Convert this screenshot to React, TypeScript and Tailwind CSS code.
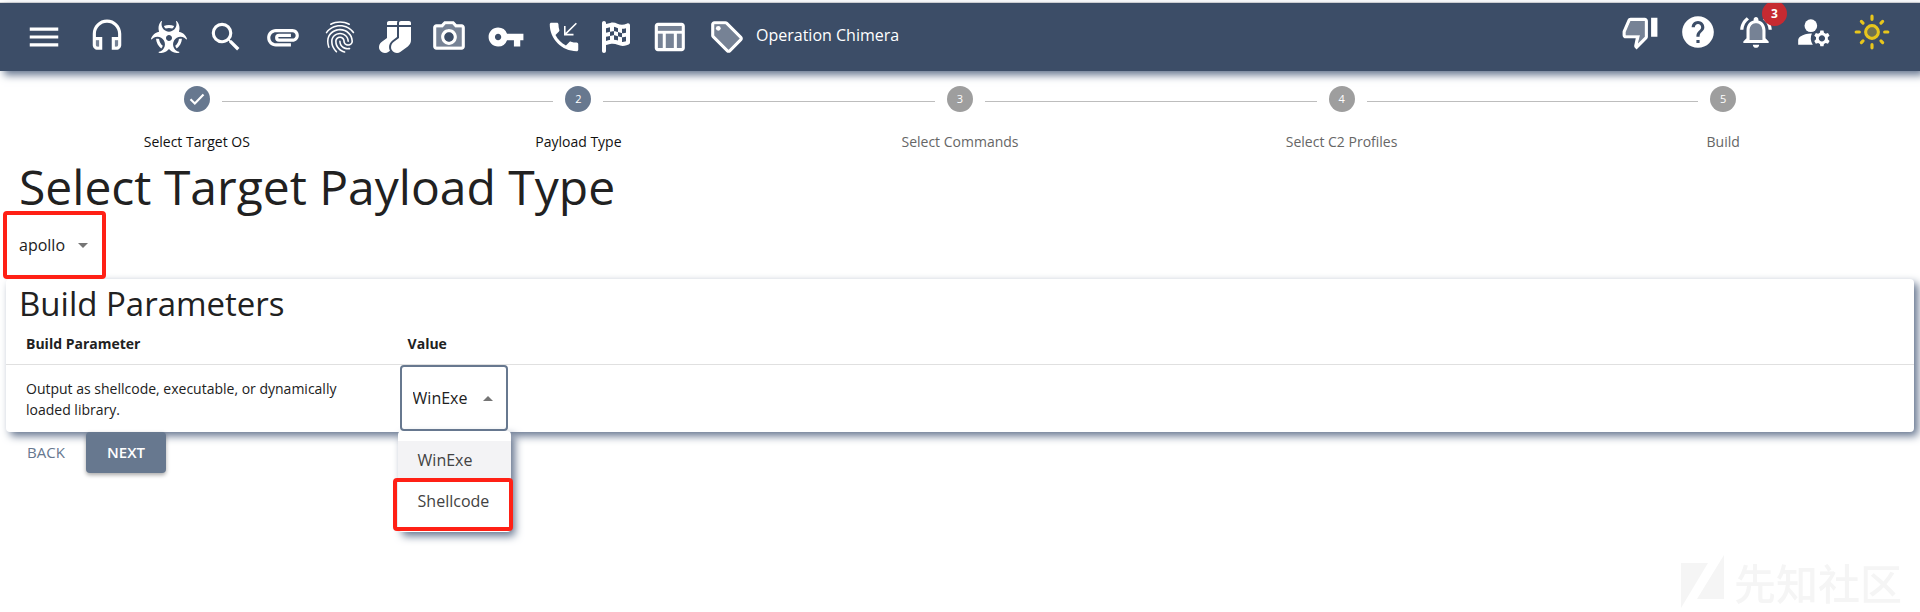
import React, { useState } from "react";
import {
  MdMenu,
  MdSearch,
  MdAttachment,
  MdFingerprint,
  MdVpnKey,
  MdPhoneCallback,
  MdHelp,
  MdManageAccounts,
} from "react-icons/md";
import { FaBiohazard, FaSocks } from "react-icons/fa";
import { FaFlagCheckered } from "react-icons/fa6";

type TwoToneProps = { shade: string; line: string; children?: React.ReactNode };

function TwoTone({ shade, line, children }: TwoToneProps) {
  return (
    <svg viewBox="0 0 24 24" className="size-[38px]" fill="currentColor" aria-hidden="true">
      <path d={shade} opacity=".3" fillRule="evenodd" />
      <path d={line} />
      {children}
    </svg>
  );
}

const Headset = () => (
  <TwoTone
    shade="M5 14v3c0 .55.45 1 1 1h1v-4H5zm12 4h1c.55 0 1-.45 1-1v-3h-2v4z"
    line="M12 1c-4.97 0-9 4.03-9 9v7c0 1.66 1.34 3 3 3h3v-8H5v-2c0-3.87 3.13-7 7-7s7 3.13 7 7v2h-4v8h3c1.66 0 3-1.34 3-3v-7c0-4.97-4.03-9-9-9zM7 14v4H6c-.55 0-1-.45-1-1v-3h2zm12 3c0 .55-.45 1-1 1h-1v-4h2v3z"
  />
);

const Camera = () => (
  <TwoTone
    shade="M14.12 4H9.88L8.05 6H4v12h16V6h-4.05l-1.83-2zM12 17c-2.76 0-5-2.24-5-5s2.24-5 5-5 5 2.24 5 5-2.24 5-5 5z"
    line="M20 4h-3.17L15 2H9L7.17 4H4c-1.1 0-2 .9-2 2v12c0 1.1.9 2 2 2h16c1.1 0 2-.9 2-2V6c0-1.1-.9-2-2-2zm0 14H4V6h4.05l1.83-2h4.24l1.83 2H20v12zM12 7c-2.76 0-5 2.24-5 5s2.24 5 5 5 5-2.24 5-5-2.24-5-5-5zm0 8c-1.65 0-3-1.35-3-3s1.35-3 3-3 3 1.35 3 3-1.35 3-3 3z"
  />
);

const TableChart = () => (
  <TwoTone
    shade="M5 10h3v9H5zM17 10h3v9h-3zM5 5h15v3H5zM10 10h5v9h-5z"
    line="M20 3H5c-1.1 0-2 .9-2 2v14c0 1.1.9 2 2 2h15c1.1 0 2-.9 2-2V5c0-1.1-.9-2-2-2zm0 2v3H5V5h15zm-5 14h-5v-9h5v9zM5 10h3v9H5v-9zm12 9v-9h3v9h-3z"
  />
);

const Tag = () => (
  <TwoTone
    shade="M11 4H4v7l9 9.01L20.01 13 11 4z"
    line="M21.41 11.58l-9-9C12.05 2.22 11.55 2 11 2H4c-1.1 0-2 .9-2 2v7c0 .55.22 1.05.59 1.42l9 9c.36.36.86.58 1.41.58s1.05-.22 1.41-.59l7-7c.37-.36.59-.86.59-1.41s-.23-1.06-.59-1.42zM13 20.01L4 11V4h7v-.01l9 9-7 7.02z"
  >
    <circle cx="6.5" cy="6.5" r="1.5" />
  </TwoTone>
);

const ThumbDown = () => (
  <TwoTone
    shade="M3 12v2h9l-1.34 5.34L15 15V5H6z"
    line="M15 3H6c-.83 0-1.54.5-1.84 1.22l-3.02 7.05c-.09.23-.14.47-.14.73v2c0 1.1.9 2 2 2h6.31l-.95 4.57-.03.32c0 .41.17.79.44 1.06L9.83 23l6.58-6.59c.37-.36.59-.86.59-1.41V5c0-1.1-.9-2-2-2zm0 12l-4.34 4.34L12 14H3v-2l3-7h9v10zm4-12h4v12h-4V3z"
  />
);

const Bell = () => (
  <TwoTone
    shade="M12 6.5c-2.49 0-4 2.02-4 4.5v6h8v-6c0-2.48-1.51-4.5-4-4.5z"
    line="M12 22c1.1 0 2-.9 2-2h-4c0 1.1.9 2 2 2zm6-11c0-3.07-1.63-5.64-4.5-6.32V4c0-.83-.67-1.5-1.5-1.5s-1.5.67-1.5 1.5v.68C7.64 5.36 6 7.92 6 11v5l-2 2v1h16v-1l-2-2v-5zm-2 6H8v-6c0-2.48 1.51-4.5 4-4.5s4 2.02 4 4.5v6zM7.58 4.08L6.15 2.65C3.75 4.48 2.17 7.3 2.03 10.5h2c.15-2.65 1.51-4.97 3.55-6.42zm12.39 6.42h2c-.15-3.2-1.73-6.02-4.12-7.85l-1.42 1.43c2.02 1.45 3.39 3.77 3.54 6.42z"
  />
);

const Sun = () => (
  <svg viewBox="0 0 24 24" className="size-[38px]" aria-hidden="true">
    <circle cx="12" cy="12" r="3" fill="currentColor" opacity=".3" />
    <circle cx="12" cy="12" r="4" fill="none" stroke="currentColor" strokeWidth="2" />
    <path
      d="M2 12h2M20 12h2M12 2v2M12 20v2M5.28 5.28l1.06 1.06M17.66 17.66l1.06 1.06M18.72 5.28l-1.06 1.06M6.34 17.66l-1.06 1.06"
      stroke="currentColor"
      strokeWidth="2"
      strokeLinecap="round"
    />
  </svg>
);

function NavLink({ label, children }: { label: string; children: React.ReactNode }) {
  return (
    <a href="#" aria-label={label} className="block">
      {children}
    </a>
  );
}

const icon = "size-[38px]";

function TopBar() {
  return (
    <header className="flex h-[68px] justify-between overflow-hidden bg-[#3c4d67] pr-[29px] pl-[25px] text-white shadow-[4px_4px_8px_#65758f]">
      <nav className="flex items-center gap-[25px]">
        <button type="button" aria-label="Menu">
          <MdMenu className={icon} />
        </button>
        <NavLink label="Callbacks"><Headset /></NavLink>
        <div className="flex items-center gap-5">
          <NavLink label="Payloads"><FaBiohazard className="h-8 w-9" /></NavLink>
          <div className="flex items-center gap-[19px]">
            <NavLink label="Search"><MdSearch className={icon} /></NavLink>
            <NavLink label="Files"><MdAttachment className={icon} /></NavLink>
            <NavLink label="Artifacts"><MdFingerprint className={icon} /></NavLink>
          </div>
          <div className="flex items-center gap-[19px]">
            <NavLink label="Proxies"><FaSocks className="size-8" /></NavLink>
            <NavLink label="Screenshots"><Camera /></NavLink>
            <NavLink label="Credentials"><MdVpnKey className={icon} /></NavLink>
          </div>
          <div className="flex items-center gap-[19px]">
            <NavLink label="Phone"><MdPhoneCallback className={icon} /></NavLink>
            <NavLink label="Objectives"><FaFlagCheckered className="h-8 w-7" /></NavLink>
          </div>
          <NavLink label="Reporting"><TableChart /></NavLink>
          <div className="flex items-center gap-[10px]">
            <NavLink label="Tags"><Tag /></NavLink>
            <a href="#" className="pb-1 text-base">Operation Chimera</a>
          </div>
        </div>
      </nav>
      <div className="flex items-center gap-5 pb-[10px]">
        <button type="button" aria-label="Feedback"><ThumbDown /></button>
        <button type="button" aria-label="Help"><MdHelp className={icon} /></button>
        <button type="button" aria-label="Notifications" className="relative">
          <Bell />
          <span className="absolute -top-3 -right-3 flex size-[25px] items-center justify-center rounded-full bg-[#c62a31] text-xs font-bold">
            3
          </span>
        </button>
        <button type="button" aria-label="Account settings"><MdManageAccounts className={icon} /></button>
        <button type="button" aria-label="Toggle theme" className="text-[#e8c61c]"><Sun /></button>
      </div>
    </header>
  );
}

const steps = ["Select Target OS", "Payload Type", "Select Commands", "Select C2 Profiles", "Build"];

function Stepper({ current }: { current: number }) {
  return (
    <ol className="grid grid-cols-5 px-[6px] pt-[15px]">
      {steps.map((name, i) => (
        <li key={name} className="flex flex-col items-center">
          <div className="flex h-[30px] w-full items-center gap-3">
            <span className={i === 0 ? "h-px flex-1" : "h-px flex-1 bg-[#bdbdbd]"} />
            <span
              className={
                i <= current
                  ? "flex size-[26px] items-center justify-center self-start rounded-full bg-[#67788f] text-[11px] text-white"
                  : "flex size-[26px] items-center justify-center self-start rounded-full bg-[#9e9e9e] text-[11px] text-white"
              }
            >
              {i < current ? (
                <svg viewBox="0 0 24 24" className="size-[26px]" fill="none" aria-label="Done">
                  <path d="M6 12.2l4 4 8-8.4" stroke="white" strokeWidth="2" />
                </svg>
              ) : (
                i + 1
              )}
            </span>
            <span className={i === steps.length - 1 ? "h-px flex-1" : "h-px flex-1 bg-[#bdbdbd]"} />
          </div>
          <span
            className={
              i <= current
                ? "mt-4 text-sm leading-5 font-medium text-[#111111]"
                : "mt-4 text-sm leading-5 text-[#666666]"
            }
          >
            {name}
          </span>
        </li>
      ))}
    </ol>
  );
}

function Caret({ up = false }: { up?: boolean }) {
  return (
    <svg viewBox="0 0 10 5" className="pointer-events-none -ml-[23px] h-[5px] w-[10px]" fill="#757575" aria-hidden="true">
      <path d={up ? "M0 5l5-5 5 5z" : "M0 0l5 5 5-5z"} />
    </svg>
  );
}

function Highlight() {
  return <span className="pointer-events-none absolute -inset-x-[5px] inset-y-0 rounded border-4 border-[#ff2015]" />;
}

export default function App() {
  const [output, setOutput] = useState("WinExe");
  return (
    <div className="min-h-screen bg-white font-['Open_Sans','Noto_Sans',sans-serif] text-[#212121]">
      <div className="pt-[2px]">
        <div className="border-t border-[#dddddd]">
          <TopBar />
        </div>
      </div>
      <Stepper current={1} />
      <main className="px-[6px]">
        <h1 className="px-[13px] pt-[10px] text-[48px] leading-[49px]">Select Target Payload Type</h1>
        <div className="relative ml-[2px] flex h-[68px] w-[93px] items-center">
          <select
            aria-label="Payload type"
            className="w-full appearance-none bg-transparent pl-[11px] text-base"
          >
            <option>apollo</option>
          </select>
          <Caret />
          <Highlight />
        </div>
        <section className="rounded bg-white shadow-[4px_4px_8px_#65758f]">
          <h2 className="px-[13px] pt-[2px] text-[33px] leading-[46px]">Build Parameters</h2>
          <table className="w-full table-fixed text-left text-sm">
            <thead>
              <tr className="border-b border-[#e0e0e0]">
                <th className="w-[20%] px-5 pt-[6px] pb-[9px] leading-[22px] font-bold">Build Parameter</th>
                <th className="px-5 pt-[6px] pb-[9px] leading-[22px] font-bold">Value</th>
              </tr>
            </thead>
            <tbody>
              <tr>
                <td className="px-5 leading-[21px]">
                  Output as shellcode, executable, or dynamically loaded library.
                </td>
                <td className="px-3 pb-px">
                  <div className="relative flex h-[66px] w-[108px] items-center rounded border-2 border-[#67788f]">
                    <select
                      aria-label="Output as shellcode, executable, or dynamically loaded library."
                      value={output}
                      onChange={(e) => setOutput(e.target.value)}
                      className="w-full appearance-none bg-transparent pl-[11px] text-base"
                    >
                      <option>WinExe</option>
                      <option>Shellcode</option>
                    </select>
                    <Caret up />
                    <ul
                      role="listbox"
                      aria-label="Output type"
                      className="absolute top-full -left-1 z-10 mt-[2px] w-[113px] rounded bg-white pt-[10px] pb-3 text-base shadow-[4px_4px_8px_#65758f]"
                    >
                      <li role="option" aria-selected="true" className="bg-[#f3f3f5] px-5 pt-2 pb-[7px] leading-[22px] text-[#424242]">
                        WinExe
                      </li>
                      <li role="option" aria-selected="false" className="relative px-5 pt-[11px] pb-[7px] leading-[24px] text-[#424242]">
                        Shellcode
                        <span className="pointer-events-none absolute top-0 -right-[2px] -bottom-[11px] -left-[5px] rounded border-4 border-[#ff2015]" />
                      </li>
                    </ul>
                  </div>
                </td>
              </tr>
            </tbody>
          </table>
        </section>
        <div className="flex">
          <button type="button" className="w-20 text-[15px] text-[#67788f]">BACK</button>
          <button
            type="button"
            className="relative h-[41px] w-20 rounded bg-[#67788f] text-[15px] font-semibold text-white shadow-[0_2px_4px_rgba(0,0,0,0.35)]"
          >
            NEXT
          </button>
        </div>
      </main>
      <div className="pointer-events-none fixed right-[18px] bottom-1 flex items-center gap-[10px] font-['Noto_Sans_CJK_SC',sans-serif] text-[#f5f5f5]">
        <svg viewBox="0 0 43 53" className="h-[53px] w-[43px]" fill="currentColor" aria-hidden="true">
          <path d="M0 8h27L0 53zM43 0v44H16z" />
        </svg>
        <span className="text-[42px] leading-[53px] font-medium">先知社区</span>
      </div>
    </div>
  );
}
